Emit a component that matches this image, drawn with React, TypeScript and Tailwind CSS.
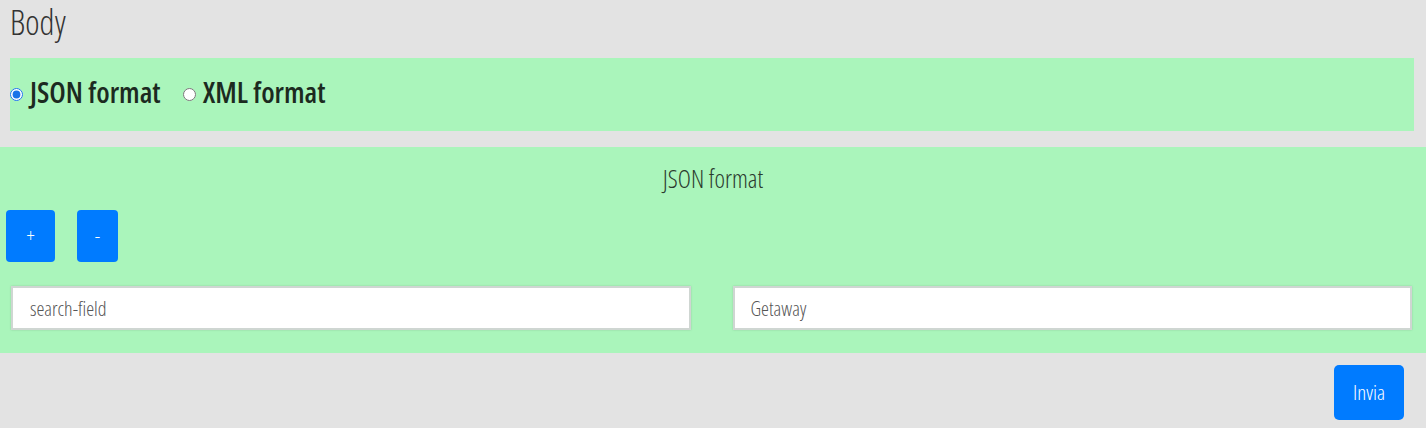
import React, { useState } from 'react';

export default function App() {
  const [format, setFormat] = useState('json');

  return (
    <div className="min-h-screen bg-[#e3e3e3] font-['Open_Sans',sans-serif] [font-stretch:75%] text-[#222]">
      {/* Heading */}
      <h1 className="pl-[10px] pt-[1px] h-[58px] text-[34px] font-light leading-[42px] text-[#333]">Body</h1>

      {/* Format chooser */}
      <div className="mx-[10px] mr-[12px] h-[73px] bg-[#aaf5bb] flex items-center gap-[10px]">
        <label className="flex items-center gap-[7px] text-[29px] font-semibold text-[#1c2a1f]">
          <input
            type="radio"
            name="format"
            checked={format === 'json'}
            onChange={() => setFormat('json')}
            className="m-0 w-[13px] h-[13px] accent-[#1a73e8]"
          />
          <span className="mb-[5px]">JSON format</span>
        </label>
        <label className="ml-[12px] flex items-center gap-[7px] text-[29px] font-semibold text-[#1c2a1f]">
          <input
            type="radio"
            name="format"
            checked={format === 'xml'}
            onChange={() => setFormat('xml')}
            className="m-0 w-[13px] h-[13px]"
          />
          <span className="mb-[5px]">XML format</span>
        </label>
      </div>

      {/* JSON editor */}
      <div className="mt-[16px] h-[206px] bg-[#aaf5bb] pt-[16px]">
        <h2 className="text-center text-[25px] font-light leading-[30px] text-[#2a3a2e]">JSON format</h2>
        <div className="mt-[17px] pl-[6px] flex gap-[22px]">
          <button className="w-[49px] h-[52px] rounded-[4px] bg-[#007bff] text-white text-[20px] font-light">+</button>
          <button className="w-[41px] h-[52px] rounded-[4px] bg-[#007bff] text-white text-[20px] font-light">-</button>
        </div>
        <div className="mt-[24px] pl-[11px] pr-[14px] grid grid-cols-2 gap-[42px]">
          <input
            type="text"
            placeholder="search-field"
            className="h-[44px] bg-white border-2 border-[#cfd6d2] shadow-[0_0_2px_rgba(0,0,0,0.15)] px-[17px] text-[20px] font-light placeholder:text-[#555] outline-none"
          />
          <input
            type="text"
            placeholder="Getaway"
            className="h-[44px] bg-white border-2 border-[#cfd6d2] shadow-[0_0_2px_rgba(0,0,0,0.15)] px-[16px] text-[20px] font-light placeholder:text-[#555] outline-none"
          />
        </div>
      </div>

      {/* Submit */}
      <div className="flex justify-end pr-[22px] pt-[12px]">
        <button className="w-[70px] h-[55px] rounded-[5px] bg-[#007bff] text-white text-[21px] font-light">Invia</button>
      </div>
    </div>
  );
}
